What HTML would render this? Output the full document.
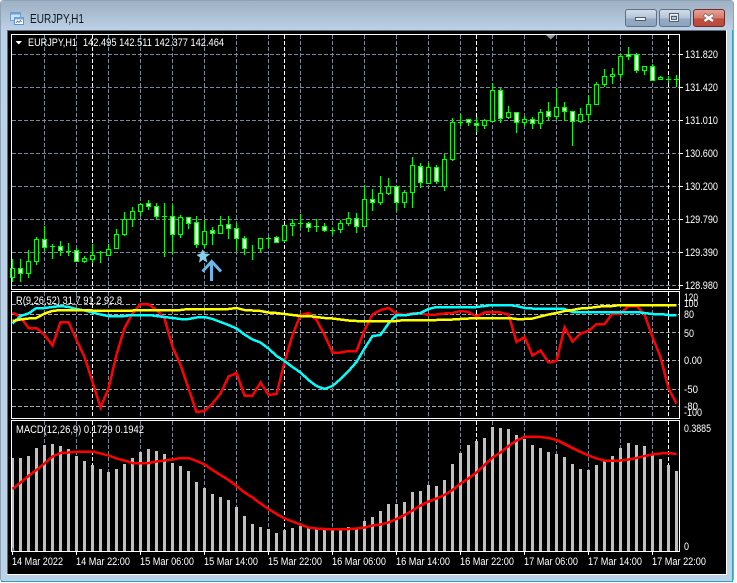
<!DOCTYPE html>
<html lang="en">
<head>
<meta charset="utf-8">
<title>EURJPY,H1</title>
<style>
html,body{margin:0;padding:0;background:#fff;width:737px;height:583px;overflow:hidden}
svg{display:block;position:absolute;left:0;top:0}
text{font-family:"Liberation Sans",Arial,sans-serif;font-size:11px;fill:#fff}
.c{shape-rendering:crispEdges}
</style>
</head>
<body>
<svg width="737" height="583" viewBox="0 0 737 583" xmlns="http://www.w3.org/2000/svg">
<defs>
<linearGradient id="tb" x1="0" y1="0" x2="0" y2="1"><stop offset="0" stop-color="#9fb1c4"/><stop offset="0.35" stop-color="#a9bccf"/><stop offset="1" stop-color="#bdd2e9"/></linearGradient>
<linearGradient id="bn" x1="0" y1="0" x2="0" y2="1"><stop offset="0" stop-color="#d3deea"/><stop offset="0.5" stop-color="#b3c4d7"/><stop offset="0.55" stop-color="#96abc3"/><stop offset="1" stop-color="#8ea5bf"/></linearGradient>
<linearGradient id="bc" x1="0" y1="0" x2="0" y2="1"><stop offset="0" stop-color="#e9a499"/><stop offset="0.5" stop-color="#d67a6c"/><stop offset="0.55" stop-color="#c24d3e"/><stop offset="1" stop-color="#bb4a3c"/></linearGradient>
</defs>

<!-- window frame -->
<rect x="0" y="0" width="737" height="583" fill="#fff"/>
<rect x="0.5" y="0.5" width="733" height="581" rx="3" fill="#bcd2e9" stroke="#8fa3b6"/>
<rect x="1" y="1" width="732" height="30" fill="url(#tb)"/>
<rect x="732" y="30" width="1" height="552" fill="#2ba4bd"/>
<rect x="1" y="581" width="732" height="1" fill="#2ba4bd"/>
<rect x="7" y="30" width="720" height="545" fill="#fff"/>
<rect x="7" y="30" width="719" height="1" fill="#5c6b7a"/>
<rect x="7" y="30" width="1" height="544" fill="#5c6b7a"/>
<rect x="8" y="31" width="718" height="543" fill="#000"/>

<!-- title icon -->
<g class="c">
<rect x="10.5" y="12.5" width="10" height="8" fill="#cfe3f7" stroke="#6f9fd0"/>
<rect x="10.5" y="12.5" width="10" height="2" fill="#6f9fd0"/>
<rect x="14.5" y="17.5" width="9" height="7" fill="#fff" stroke="#5f92c8"/>
<rect x="14.5" y="17.5" width="9" height="2" fill="#79a8d8"/>
</g>
<path d="M16 23l1.5-2 1.500 1.500 1.500-2 1 1.500" fill="none" stroke="#4a6f9c" stroke-width="0.8"/>
<text x="30" y="23" style="font-size:12.5px;fill:#10181f" textLength="54" lengthAdjust="spacingAndGlyphs">EURJPY,H1</text>

<!-- buttons -->
<rect x="625.500" y="9.500" width="31" height="17" rx="2.500" fill="url(#bn)" stroke="#5f7084"/>
<rect x="659.500" y="9.500" width="31" height="17" rx="2.500" fill="url(#bn)" stroke="#5f7084"/>
<rect x="693.500" y="9.500" width="31" height="17" rx="2.500" fill="url(#bc)" stroke="#6b2c2a"/>
<rect x="635.500" y="17.500" width="10" height="3" fill="#f2f2f2" stroke="#4f5c6a" class="c"/>
<rect x="669.500" y="13.500" width="9" height="8" fill="none" stroke="#4f5c6a" class="c"/>
<rect x="670.500" y="14.500" width="7" height="6" fill="none" stroke="#f2f2f2" class="c"/>
<rect x="671.500" y="16.500" width="5" height="3" fill="#b9c8d8" stroke="#4f5c6a" class="c"/>
<path d="M704 14.500l9.500 7M713.500 14.500l-9.500 7" stroke="#7f5a58" stroke-width="3.600" fill="none"/>
<path d="M704.500 15l8.500 6M713 15l-8.500 6" stroke="#fff" stroke-width="2.400" fill="none"/>

<!-- grid -->
<g class="c" fill="none">
<path stroke="#778899" stroke-dasharray="4 2" d="M12 54.500H679M12 87.500H679M12 120.500H679M12 153.500H679M12 186.500H679M12 219.500H679M12 252.500H679M12 285.500H679"/>
<path stroke="#778899" stroke-dasharray="4 2" d="M44.500 35V289M76.500 35V289M108.500 35V289M140.500 35V289M172.500 35V289M204.500 35V289M236.500 35V289M268.500 35V289M300.500 35V289M332.500 35V289M364.500 35V289M396.500 35V289M428.500 35V289M460.500 35V289M492.500 35V289M524.500 35V289M556.500 35V289M588.500 35V289M620.500 35V289M652.500 35V289"/>
<path stroke="#fff" stroke-dasharray="4 2" d="M92.500 35V289M284.500 35V289M476.500 35V289M668.500 35V289"/>
<path stroke="#a3a8ae" stroke-dasharray="4 2" d="M12 304.500H679M12 314.500H679M12 332.500H679M12 360.500H679M12 389.500H679M12 406.500H679"/>
<path stroke="#778899" stroke-dasharray="4 2" d="M44.500 292V418M76.500 292V418M108.500 292V418M140.500 292V418M172.500 292V418M204.500 292V418M236.500 292V418M268.500 292V418M300.500 292V418M332.500 292V418M364.500 292V418M396.500 292V418M428.500 292V418M460.500 292V418M492.500 292V418M524.500 292V418M556.500 292V418M588.500 292V418M620.500 292V418M652.500 292V418"/>
<path stroke="#fff" stroke-dasharray="4 2" d="M92.500 292V418M284.500 292V418M476.500 292V418M668.500 292V418"/>
<path stroke="#778899" stroke-dasharray="4 2" d="M44.500 421V551M76.500 421V551M108.500 421V551M140.500 421V551M172.500 421V551M204.500 421V551M236.500 421V551M268.500 421V551M300.500 421V551M332.500 421V551M364.500 421V551M396.500 421V551M428.500 421V551M460.500 421V551M492.500 421V551M524.500 421V551M556.500 421V551M588.500 421V551M620.500 421V551M652.500 421V551"/>
<path stroke="#fff" stroke-dasharray="4 2" d="M92.500 421V551M284.500 421V551M476.500 421V551M668.500 421V551"/>
</g>

<!-- candle wicks and dojis -->
<path class="c" fill="none" stroke="#00ff00" d="M12.500 259V282M20.500 259V282M28.500 250V278M36.500 237V265M44.500 226V251M52.500 244V259M60.500 241V256M68.500 243V256M76.500 248V262M84.500 256V263M92.500 244V263M100.500 251V263M108.500 244V256M116.500 229V249M124.500 212V236M132.500 207V227M140.500 203V216M148.500 200V210M156.500 203V219M164.500 203V257M172.500 205V254M180.500 215V238M188.500 217V229M196.500 216V248M204.500 220V248M212.500 227V245M220.500 216V234M228.500 216V239M236.500 223V251M244.500 236V255M252.500 245V260M260.500 238V252M268.500 237V248M276.500 236V243M284.500 225V242M292.500 219V236M300.500 214V228M308.500 222V232M316.500 219V232M324.500 223V232M332.500 228V235M340.500 220V233M348.500 212V226M356.500 213V233M364.500 185V227M372.500 189V211M380.500 176V205M388.500 178V195M396.500 186V211M404.500 190V208M412.500 157V208M420.500 163V188M428.500 163V184M436.500 165V184M444.500 154V191M452.500 118V161M460.500 114V126M468.500 119V126M476.500 117V132M484.500 119V129M492.500 83V122M500.500 88V123M508.500 106V119M516.500 112V133M524.500 116V126M532.500 117V129M540.500 109V129M548.500 102V121M556.500 88V119M564.500 102V121M572.500 111V146M580.500 108V123M588.500 95V121M596.500 82V104M604.500 69V87M612.500 68V84M620.500 54V78M628.500 47V60M636.500 53V73M644.500 66V75M652.500 64V81M660.500 76V80M668.500 76V83M676.500 75V87M50 246.500H55M66 251.500H71M98 252.500H103M162 216.500H167M266 238.500H271M298 223.500H303M314 226.500H319M330 230.500H335M458 122.500H463M666 79.500H671M674 79.500H679"/>

<!-- hollow bodies -->
<path class="c" fill="#000" stroke="#00ff00" d="M10.500 268.500h4v9h-4zM26.500 261.500h4v12h-4zM34.500 239.500h4v22h-4zM82.500 258.500h4v3h-4zM90.500 255.500h4v4h-4zM106.500 249.500h4v6h-4zM114.500 234.500h4v14h-4zM122.500 219.500h4v15h-4zM130.500 211.500h4v8h-4zM138.500 204.500h4v7h-4zM178.500 217.500h4v17h-4zM202.500 231.500h4v13h-4zM218.500 225.500h4v8h-4zM258.500 238.500h4v10h-4zM282.500 225.500h4v15h-4zM290.500 223.500h4v2h-4zM338.500 223.500h4v6h-4zM346.500 218.500h4v5h-4zM362.500 199.500h4v27h-4zM378.500 193.500h4v9h-4zM386.500 186.500h4v7h-4zM402.500 192.500h4v10h-4zM410.500 165.500h4v27h-4zM426.500 167.500h4v16h-4zM442.500 159.500h4v27h-4zM450.500 122.500h4v37h-4zM482.500 120.500h4v5h-4zM490.500 90.500h4v31h-4zM506.500 112.500h4v5h-4zM522.500 119.500h4v3h-4zM538.500 112.500h4v11h-4zM554.500 107.500h4v9h-4zM578.500 114.500h4v7h-4zM586.500 104.500h4v10h-4zM594.500 84.500h4v20h-4zM602.500 76.500h4v8h-4zM610.500 74.500h4v2h-4zM618.500 56.500h4v18h-4zM642.500 66.500h4v4h-4zM658.500 77.500h4v2h-4z"/>

<!-- filled bodies -->
<path class="c" fill="#fff" stroke="#00ff00" d="M18.500 268.500h4v5h-4zM42.500 239.500h4v8h-4zM58.500 246.500h4v4h-4zM74.500 250.500h4v11h-4zM146.500 203.500h4v3h-4zM154.500 206.500h4v10h-4zM170.500 216.500h4v18h-4zM186.500 217.500h4v6h-4zM194.500 222.500h4v22h-4zM210.500 230.500h4v3h-4zM226.500 224.500h4v4h-4zM234.500 228.500h4v10h-4zM242.500 238.500h4v10h-4zM274.500 237.500h4v5h-4zM306.500 223.500h4v4h-4zM322.500 226.500h4v4h-4zM354.500 218.500h4v8h-4zM370.500 199.500h4v3h-4zM394.500 186.500h4v16h-4zM418.500 166.500h4v16h-4zM434.500 167.500h4v14h-4zM466.500 119.500h4v3h-4zM474.500 123.500h4v2h-4zM498.500 90.500h4v28h-4zM514.500 112.500h4v10h-4zM530.500 119.500h4v4h-4zM546.500 111.500h4v5h-4zM562.500 107.500h4v4h-4zM570.500 111.500h4v10h-4zM626.500 54.500h4v2h-4zM634.500 54.500h4v16h-4zM650.500 66.500h4v14h-4z"/>

<!-- arrow objects -->
<polygon points="202.700,249.300 205,253.500 210.300,254 206,257.300 207.500,262.700 203,259.800 199,262.700 200,257.500 196.500,255 200.500,253.500" fill="#87ceeb"/>
<path class="c" d="M211.500 281V261" stroke="#6db6ea" stroke-width="3" fill="none"/>
<path d="M202.500 271.500L211.700 261.500L221 271.500" stroke="#6db6ea" stroke-width="3" fill="none"/>
<path d="M546 35h9.500l-4.700 4.500z" fill="#8a97a6"/>

<!-- RSI lines -->
<g class="c" fill="none" stroke-width="2.500">
<polyline stroke="#ff0000" points="12.500,312.500 20.500,317 28.500,328 36.500,328 44.500,335 52.500,345.500 60.500,322 68.500,322 76.500,340 84.500,357 92.500,382 100.500,407.500 108.500,388.500 116.500,354.500 124.500,328 132.500,313.500 140.500,304 148.500,304 156.500,310 164.500,318.500 172.500,347 180.500,365 188.500,388.500 196.500,412 204.500,411 212.500,403.500 220.500,393.500 228.500,376.500 236.500,373 244.500,395.500 252.500,395.500 260.500,382.500 268.500,395 276.500,394 284.500,362 292.500,335 300.500,315 308.500,313 316.500,320 324.500,335 332.500,352.500 340.500,352.500 348.500,351 356.500,351 364.500,330 372.500,314.500 380.500,310 388.500,308 396.500,313.500 404.500,315 412.500,313 420.500,313 428.500,315 436.500,314.500 444.500,313.500 452.500,313 460.500,311 468.500,312 476.500,316.500 484.500,312.500 492.500,312 500.500,312.500 508.500,314.500 516.500,342 524.500,337 532.500,355.500 540.500,350.500 548.500,362.500 556.500,361 564.500,327.500 572.500,341.500 580.500,333.500 588.500,331 596.500,324 604.500,324 612.500,313.500 620.500,313.500 628.500,306 636.500,306 644.500,314.500 652.500,337 660.500,357 668.500,388.500 676.500,403.500"/>
<polyline stroke="#00ffff" points="12.500,323.500 20.500,316 28.500,313.500 36.500,308 44.500,308 52.500,307 60.500,306 68.500,307 76.500,309 84.500,310.500 92.500,312.500 100.500,314.500 108.500,316 116.500,316 124.500,316 132.500,315 140.500,315 148.500,315 156.500,316 164.500,317 172.500,318 180.500,319 188.500,319 196.500,317.500 204.500,317 212.500,319 220.500,322 228.500,325 236.500,328.500 244.500,334.500 252.500,339.500 260.500,342.500 268.500,348.500 276.500,356 284.500,361 292.500,367 300.500,372.500 308.500,380 316.500,386 324.500,389 332.500,386 340.500,379 348.500,371 356.500,362 364.500,348.500 372.500,336 380.500,335 388.500,323.500 396.500,315 404.500,315.500 412.500,314 420.500,313 428.500,309 436.500,307 444.500,307 452.500,307 460.500,307 468.500,307 476.500,307 484.500,306 492.500,305 500.500,305 508.500,305 516.500,306 524.500,308 532.500,308.500 540.500,308.500 548.500,308.500 556.500,308.500 564.500,309 572.500,312 580.500,312 588.500,312 596.500,312 604.500,312 612.500,312 620.500,312 628.500,312 636.500,312 644.500,313 652.500,314 660.500,314 668.500,315 676.500,315"/>
<polyline stroke="#ffff00" points="12.500,321 20.500,319.500 28.500,318.500 36.500,318 44.500,313.500 52.500,311 60.500,310 68.500,310 76.500,310 84.500,310 92.500,310.500 100.500,310.500 108.500,310.500 116.500,310.500 124.500,310.500 132.500,310.500 140.500,310 148.500,310 156.500,310 164.500,310 172.500,310 180.500,310 188.500,309 196.500,309 204.500,309 212.500,309 220.500,309 228.500,309 236.500,308 244.500,310 252.500,310.500 260.500,311 268.500,312.500 276.500,313 284.500,314 292.500,315 300.500,316 308.500,316 316.500,317 324.500,318 332.500,318.500 340.500,319.500 348.500,320.500 356.500,321 364.500,321 372.500,321 380.500,321 388.500,321 396.500,321 404.500,320 412.500,320 420.500,320 428.500,320 436.500,320 444.500,319.500 452.500,319.500 460.500,319 468.500,318.500 476.500,318 484.500,318 492.500,318 500.500,318 508.500,318 516.500,319 524.500,319 532.500,318.500 540.500,316.500 548.500,314.500 556.500,313 564.500,311 572.500,310 580.500,308.500 588.500,308 596.500,307 604.500,306 612.500,306 620.500,305 628.500,305 636.500,305 644.500,305 652.500,305 660.500,305 668.500,305 676.500,305"/>
</g>

<!-- MACD histogram -->
<path class="c" fill="none" stroke="#c0c0c0" stroke-width="3" d="M12.500 458V551M20.500 458V551M28.500 456V551M36.500 448V551M44.500 445V551M52.500 444V551M60.500 446V551M68.500 449V551M76.500 456V551M84.500 461V551M92.500 465V551M100.500 469V551M108.500 472V551M116.500 469V551M124.500 464V551M132.500 458V551M140.500 452V551M148.500 449V551M156.500 451V551M164.500 454V551M172.500 463V551M180.500 466V551M188.500 471V551M196.500 482V551M204.500 488V551M212.500 494V551M220.500 497V551M228.500 500V551M236.500 507V551M244.500 516V551M252.500 524V551M260.500 527V551M268.500 529V551M276.500 533V551M284.500 530V551M292.500 528V551M300.500 526V551M308.500 528V551M316.500 529V551M324.500 529V551M332.500 529V551M340.500 529V551M348.500 527V551M356.500 528V551M364.500 521V551M372.500 517V551M380.500 511V551M388.500 504V551M396.500 504V551M404.500 502V551M412.500 492V551M420.500 491V551M428.500 485V551M436.500 486V551M444.500 480V551M452.500 464V551M460.500 453V551M468.500 445V551M476.500 441V551M484.500 438V551M492.500 427V551M500.500 428V551M508.500 429V551M516.500 435V551M524.500 439V551M532.500 445V551M540.500 448V551M548.500 452V551M556.500 454V551M564.500 457V551M572.500 464V551M580.500 469V551M588.500 470V551M596.500 465V551M604.500 461V551M612.500 456V551M620.500 448V551M628.500 443V551M636.500 445V551M644.500 446V551M652.500 455V551M660.500 459V551M668.500 465V551M676.500 471V551"/>

<!-- MACD signal -->
<polyline class="c" fill="none" stroke="#ff0000" stroke-width="2.500" points="12.500,489 20.500,482.500 28.500,476 36.500,470 44.500,463.500 52.500,456.500 60.500,453 68.500,452.500 76.500,451.500 84.500,451.500 92.500,451.500 100.500,453.500 108.500,455.500 116.500,458.500 124.500,460.500 132.500,463 140.500,463 148.500,463 156.500,461.500 164.500,460.500 172.500,459.500 180.500,458 188.500,458 196.500,461 204.500,464.500 212.500,470 220.500,475 228.500,480 236.500,486 244.500,492.500 252.500,497.500 260.500,503.500 268.500,509 276.500,514 284.500,518.500 292.500,521.500 300.500,524.500 308.500,527.500 316.500,528.500 324.500,529 332.500,529 340.500,529 348.500,529 356.500,528.500 364.500,527.500 372.500,525.500 380.500,524.500 388.500,522.500 396.500,519 404.500,515 412.500,510.500 420.500,505.500 428.500,501.500 436.500,498.500 444.500,495 452.500,490 460.500,483.500 468.500,478.500 476.500,472.500 484.500,465 492.500,457.500 500.500,452.500 508.500,446 516.500,440.500 524.500,437 532.500,436.500 540.500,437 548.500,438 556.500,440 564.500,444 572.500,448 580.500,452 588.500,455.500 596.500,458.500 604.500,460.500 612.500,461 620.500,460.500 628.500,459.500 636.500,458 644.500,456 652.500,454.500 660.500,453.500 668.500,453 676.500,454"/>

<!-- panel borders -->
<g class="c" fill="none" stroke="#fff">
<rect x="11.500" y="34.500" width="668" height="255"/>
<rect x="11.500" y="291.500" width="668" height="127"/>
<path d="M11.500 420.500H679.500V551.500H11.500Z"/>
<path d="M680 54.500h3M680 87.500h3M680 120.500h3M680 153.500h3M680 186.500h3M680 219.500h3M680 252.500h3M680 285.500h3"/>
<path d="M12.500 552v3M76.500 552v3M140.500 552v3M204.500 552v3M268.500 552v3M332.500 552v3M396.500 552v3M460.500 552v3M524.500 552v3M588.500 552v3M652.500 552v3"/>
</g>
<path d="M12 551V547l3 4z" fill="#778899"/>

<!-- header text -->
<path d="M15.500 41h6.500l-3.200 3.500z" fill="#fff"/>
<text x="28" y="46" textLength="49" lengthAdjust="spacingAndGlyphs">EURJPY,H1</text>
<text x="83" y="46" textLength="141" lengthAdjust="spacingAndGlyphs">142.495 142.511 142.377 142.464</text>
<text x="16" y="304" textLength="106" lengthAdjust="spacingAndGlyphs">R(9,26,52) 31.7 91.2 92.8</text>
<text x="16" y="433" textLength="128" lengthAdjust="spacingAndGlyphs">MACD(12,26,9) 0.1729 0.1942</text>

<!-- price axis -->
<g>
<text x="685" y="58" textLength="33" lengthAdjust="spacingAndGlyphs">131.820</text>
<text x="685" y="91" textLength="33" lengthAdjust="spacingAndGlyphs">131.420</text>
<text x="685" y="124" textLength="33" lengthAdjust="spacingAndGlyphs">131.010</text>
<text x="685" y="157" textLength="33" lengthAdjust="spacingAndGlyphs">130.600</text>
<text x="685" y="190" textLength="33" lengthAdjust="spacingAndGlyphs">130.200</text>
<text x="685" y="223" textLength="33" lengthAdjust="spacingAndGlyphs">129.790</text>
<text x="685" y="256" textLength="33" lengthAdjust="spacingAndGlyphs">129.390</text>
<text x="685" y="289" textLength="33" lengthAdjust="spacingAndGlyphs">128.980</text>
<text x="684" y="301" textLength="14" lengthAdjust="spacingAndGlyphs">120</text>
<text x="684" y="307" textLength="14" lengthAdjust="spacingAndGlyphs">100</text>
<text x="684" y="318" textLength="10" lengthAdjust="spacingAndGlyphs">80</text>
<text x="684" y="337" textLength="10" lengthAdjust="spacingAndGlyphs">50</text>
<text x="684" y="364" textLength="18" lengthAdjust="spacingAndGlyphs">0.00</text>
<text x="684" y="393" textLength="14" lengthAdjust="spacingAndGlyphs">-50</text>
<text x="684" y="410" textLength="14" lengthAdjust="spacingAndGlyphs">-80</text>
<text x="684" y="416" textLength="18" lengthAdjust="spacingAndGlyphs">-100</text>
<text x="684" y="432" textLength="27" lengthAdjust="spacingAndGlyphs">0.3885</text>
<text x="684" y="550" textLength="5" lengthAdjust="spacingAndGlyphs">0</text>
</g>

<!-- time axis -->
<g>
<text x="12" y="565" textLength="51" lengthAdjust="spacingAndGlyphs">14 Mar 2022</text>
<text x="76" y="565" textLength="54" lengthAdjust="spacingAndGlyphs">14 Mar 22:00</text>
<text x="140" y="565" textLength="54" lengthAdjust="spacingAndGlyphs">15 Mar 06:00</text>
<text x="204" y="565" textLength="54" lengthAdjust="spacingAndGlyphs">15 Mar 14:00</text>
<text x="268" y="565" textLength="54" lengthAdjust="spacingAndGlyphs">15 Mar 22:00</text>
<text x="332" y="565" textLength="54" lengthAdjust="spacingAndGlyphs">16 Mar 06:00</text>
<text x="396" y="565" textLength="54" lengthAdjust="spacingAndGlyphs">16 Mar 14:00</text>
<text x="460" y="565" textLength="54" lengthAdjust="spacingAndGlyphs">16 Mar 22:00</text>
<text x="524" y="565" textLength="54" lengthAdjust="spacingAndGlyphs">17 Mar 06:00</text>
<text x="588" y="565" textLength="54" lengthAdjust="spacingAndGlyphs">17 Mar 14:00</text>
<text x="652" y="565" textLength="54" lengthAdjust="spacingAndGlyphs">17 Mar 22:00</text>
</g>
</svg>
</body>
</html>
